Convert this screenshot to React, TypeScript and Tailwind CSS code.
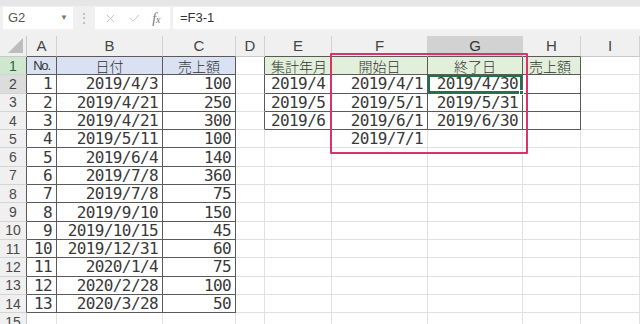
import { Check, X } from "lucide-react";

type Cell = { t: string; a?: "l" | "r" | "c"; j?: boolean };

const COLS = ["", "A", "B", "C", "D", "E", "F", "G", "H", "I"];

const sales: [string, string, string][] = [
  ["1", "2019/4/3", "100"],
  ["2", "2019/4/21", "250"],
  ["3", "2019/4/21", "300"],
  ["4", "2019/5/11", "100"],
  ["5", "2019/6/4", "140"],
  ["6", "2019/7/8", "360"],
  ["7", "2019/7/8", "75"],
  ["8", "2019/9/10", "150"],
  ["9", "2019/10/15", "45"],
  ["10", "2019/12/31", "60"],
  ["11", "2020/1/4", "75"],
  ["12", "2020/2/28", "100"],
  ["13", "2020/3/28", "50"],
];

const summary: [string, string, string][] = [
  ["2019/4", "2019/4/1", "2019/4/30"],
  ["2019/5", "2019/5/1", "2019/5/31"],
  ["2019/6", "2019/6/1", "2019/6/30"],
];

// cell content by [row][col], row 1..15, col 1..9
function cellAt(r: number, c: number): Cell | null {
  if (r === 1) {
    if (c === 1) return { t: "No.", a: "c" };
    if (c === 2) return { t: "日付", a: "c", j: true };
    if (c === 3) return { t: "売上額", a: "c", j: true };
    if (c === 5) return { t: "集計年月", a: "l", j: true };
    if (c === 6) return { t: "開始日", a: "c", j: true };
    if (c === 7) return { t: "終了日", a: "c", j: true };
    if (c === 8) return { t: "売上額", a: "l", j: true };
    return null;
  }
  const s = sales[r - 2];
  if (s && c >= 1 && c <= 3) return { t: s[c - 1], a: "r" };
  const m = summary[r - 2];
  if (m && c === 5) return { t: m[0], a: "l" };
  if (m && c === 6) return { t: m[1], a: "r" };
  if (m && c === 7) return { t: m[2], a: "r" };
  if (r === 5 && c === 6) return { t: "2019/7/1", a: "r" };
  return null;
}

const inTable = (r: number, c: number) =>
  (r >= 1 && r <= 14 && c >= 1 && c <= 3) || (r >= 1 && r <= 4 && c >= 5 && c <= 8);

function FormulaBar() {
  return (
    <div className="h-[36px] bg-[#f0f0f0] border-t-[6px] border-[#e6e6e6] flex items-start pt-[1px] text-[#555]">
      <div className="ml-[3px] w-[70px] h-[22px] bg-white flex items-center justify-between px-[5px]">
        <span className="text-[13px]">G2</span>
        <span className="text-[8px] text-[#777]">▼</span>
      </div>
      <div className="w-[22px] h-[22px] flex items-center justify-center text-[12px] text-[#aaa]">⋮</div>
      <div className="w-[75px] h-[22px] bg-white flex items-center justify-around px-[4px] text-[#b5b5b5]">
        <X size={13} strokeWidth={1.5} />
        <Check size={13} strokeWidth={1.5} />
        <span className="font-['Liberation_Serif',serif] italic text-[14px] text-[#777]">
          f<span className="text-[10px]">x</span>
        </span>
      </div>
      <div className="ml-[3px] flex-1 h-[22px] bg-white flex items-center px-[7px] text-[13px] text-[#333]">
        =F3-1
      </div>
    </div>
  );
}

function GridCell({ r, c }: { r: number; c: number }) {
  const dr = inTable(r, c) || inTable(r, c + 1);
  const db = inTable(r, c) || inTable(r + 1, c);

  if (r === 0 && c === 0) {
    return (
      <div className="bg-[#f0f0f0] border-r border-b border-[#c8c8c8] flex items-end justify-end p-[3px]">
        <svg width="15" height="15" viewBox="0 0 15 15">
          <polygon points="15,0 15,15 0,15" fill="#bdbdbd" />
        </svg>
      </div>
    );
  }

  if (r === 0) {
    const sel = c === 7;
    return (
      <div
        className={`flex items-center justify-center text-[15px] border-r border-b ${
          sel ? "bg-[#d2d2d2] text-[#333]" : "bg-[#f0f0f0] text-[#444]"
        } ${db ? "border-b-[#5a5a5a]" : "border-b-[#c8c8c8]"} border-r-[#d0d0d0]`}
      >
        {COLS[c]}
      </div>
    );
  }

  if (c === 0) {
    const bg =
      r === 1 ? "bg-[#cfe6cf] text-[#1e6b38]" : r === 2 ? "bg-[#dcdcdc] text-[#444]" : "bg-[#f0f0f0] text-[#4a4a4a]";
    return (
      <div
        className={`flex items-center justify-center text-[14px] leading-none border-r border-b border-b-[#d4d4d4] ${bg} ${
          dr ? "border-r-[#5a5a5a]" : "border-r-[#c8c8c8]"
        }`}
      >
        {r}
      </div>
    );
  }

  const cell = cellAt(r, c);
  let fill = "bg-white";
  if (r === 1 && c >= 1 && c <= 3) fill = "bg-[#d9e1f2]";
  if (r === 1 && c >= 5 && c <= 8) fill = "bg-[#e2efda]";
  const selected = r === 2 && c === 7;

  let textCls =
    "font-['DejaVu_Sans_Mono',monospace] text-[16px] tracking-[-0.6px] leading-[17px] text-[#383838] whitespace-nowrap";
  if (cell?.j) textCls = "font-['Noto_Sans_CJK_JP',sans-serif] font-light text-[14px] leading-[16px] text-[#333] whitespace-nowrap";
  if (cell?.t === "No.") textCls = "font-['Liberation_Sans',sans-serif] text-[13px] tracking-[-1.2px] leading-[16px] text-[#333]";

  return (
    <div
      className={`relative flex items-center border-r border-b ${fill} ${
        dr ? "border-r-[#5a5a5a]" : "border-r-[#e1e1e1]"
      } ${db ? "border-b-[#5a5a5a]" : "border-b-[#e1e1e1]"} ${
        cell?.a === "r" ? "justify-end pr-[4px]" : cell?.a === "c" ? "justify-center" : "justify-start pl-[6px]"
      } ${selected ? "shadow-[inset_0_0_0_2px_#217346]" : ""}`}
    >
      {cell && <span className={textCls}>{cell.t}</span>}
    </div>
  );
}

export default function App() {
  const rows = Array.from({ length: 16 }, (_, r) => r);
  const cols = Array.from({ length: 10 }, (_, c) => c);

  return (
    <div className="w-[640px] h-[324px] overflow-hidden bg-white font-['Liberation_Sans',sans-serif]">
      <FormulaBar />
      <div className="relative">
        <div className="grid grid-cols-[27px_30px_106px_73px_29px_67px_96px_95px_58px_59px] grid-rows-[21px_repeat(15,18.3px)]">
          {rows.map((r) => cols.map((c) => <GridCell key={`${r}-${c}`} r={r} c={c} />))}
        </div>
        {/* fill handle of the active cell */}
        <div className="absolute left-[519px] top-[54px] w-[5px] h-[5px] bg-[#217346] border border-white" />
        {/* hand-drawn highlight */}
        <div className="absolute left-[330px] top-[17px] w-[198px] h-[101px] border-[2.5px] border-[#d9336a] rounded-[1px]" />
      </div>
    </div>
  );
}
